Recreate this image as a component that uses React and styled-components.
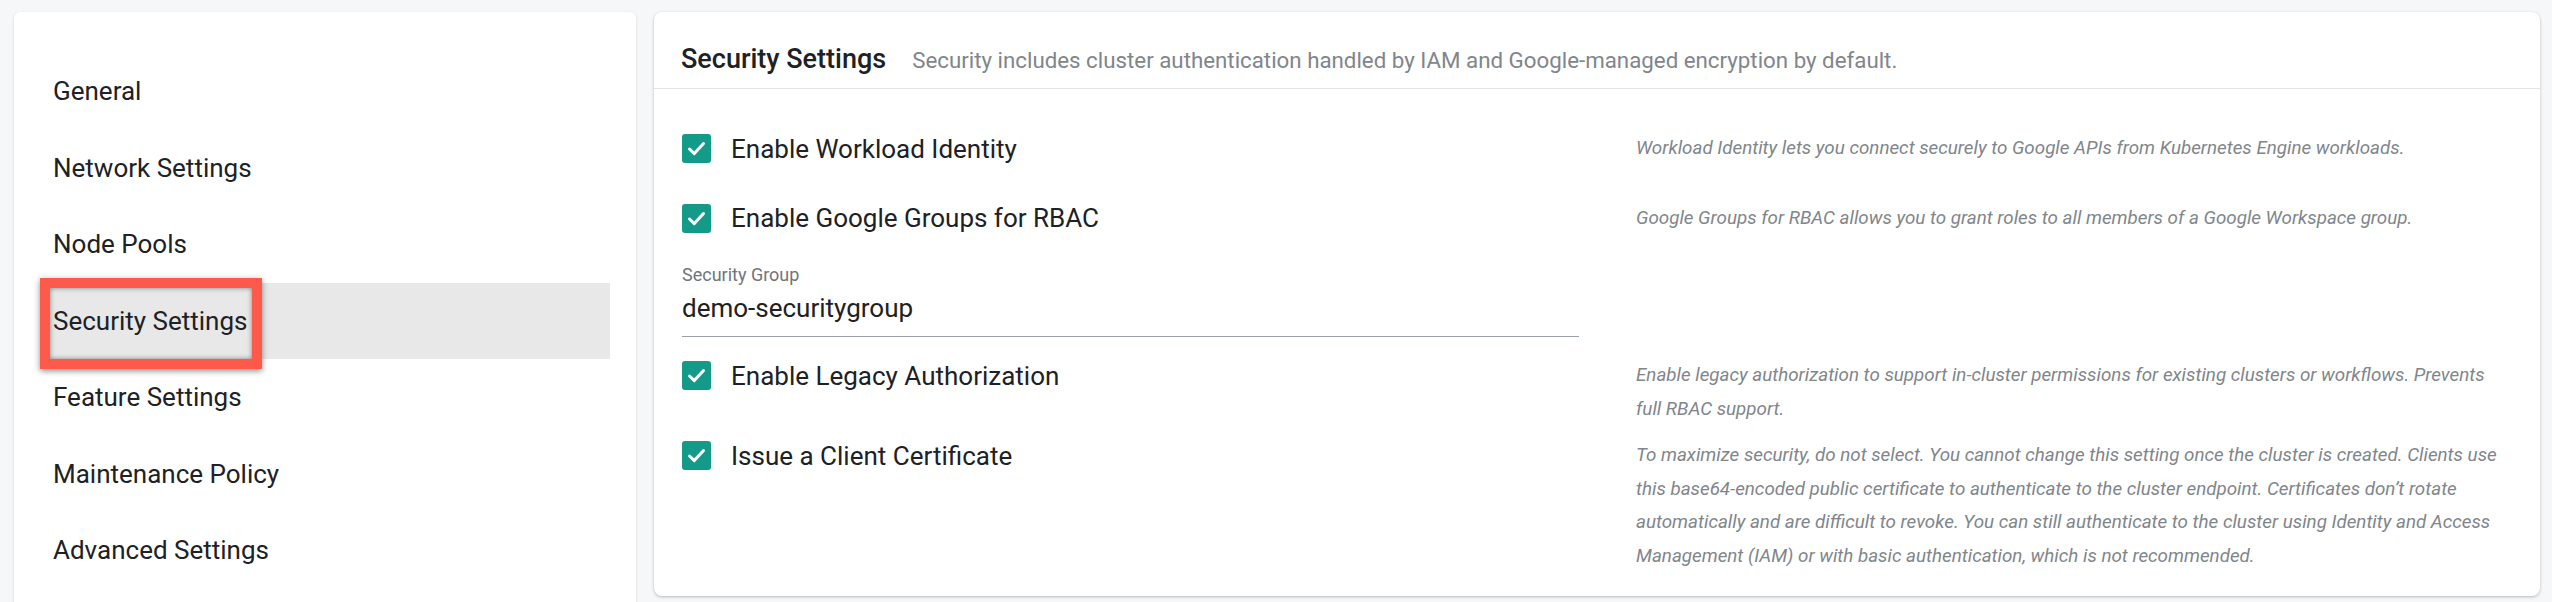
import React from 'react';
import styled, { createGlobalStyle } from 'styled-components';

const GlobalStyle = createGlobalStyle`
  body {
    margin: 0;
    background: #f6f7f9;
    font-family: Roboto, "Liberation Sans", Arial, sans-serif;
    color: #202124;
  }
`;

const Page = styled.div`
  display: flex;
  align-items: flex-start;
  gap: 18px;
  padding: 12px 12px 0 14px;
  height: 590px;
  overflow: hidden;
`;

const NavCard = styled.nav`
  width: 622px;
  height: 640px;
  flex-shrink: 0;
  background: white;
  border-radius: 6px;
  box-shadow: 0 1px 3px rgba(60, 64, 67, 0.18);
  padding: 41px 26px 0 26px;
  box-sizing: border-box;
`;

const NavItem = styled.div`
  position: relative;
  height: 76.5px;
  line-height: 76.5px;
  padding-left: 13px;
  font-size: 26px;
  color: #202124;
  background: ${p => (p.active ? '#e8e8e8' : 'transparent')};
  cursor: pointer;
`;

const Callout = styled.span`
  position: absolute;
  left: 0;
  top: -5px;
  width: 222px;
  height: 91px;
  box-sizing: border-box;
  border: 10px solid #fd5a4b;
  box-shadow: 0 2px 6px rgba(0, 0, 0, 0.45), inset 0 0 5px rgba(0, 0, 0, 0.45);
  pointer-events: none;
`;

const Panel = styled.section`
  flex: 1;
  background: white;
  border-radius: 8px;
  box-shadow: 0 1px 3px rgba(60, 64, 67, 0.35);
  height: 584px;
  box-sizing: border-box;
`;

const PanelHeader = styled.header`
  display: flex;
  align-items: baseline;
  gap: 26px;
  height: 77px;
  box-sizing: border-box;
  padding: 31px 27px 0;
  border-bottom: 1px solid #e3e3e3;
`;

const Title = styled.h2`
  margin: 0;
  font-size: 27px;
  font-weight: 500;
  color: #202124;
`;

const Subtitle = styled.span`
  font-size: 22.3px;
  color: #80868b;
`;

const Body = styled.div`
  padding: 43px 40px 0 28px;
`;

const Row = styled.div`
  display: grid;
  grid-template-columns: 897px 1fr;
  column-gap: 57px;
  align-items: start;
  margin-bottom: ${p => p.after || 0}px;
`;

const CheckLabel = styled.label`
  display: flex;
  align-items: center;
  gap: 20px;
  height: 33px;
  font-size: 26px;
  color: #202124;
`;

const Box = styled.svg`
  width: 29px;
  height: 29px;
  flex-shrink: 0;
`;

const Help = styled.p`
  margin: 0;
  font-size: 18.8px;
  line-height: 33.5px;
  font-style: italic;
  color: #80868b;
  white-space: nowrap;
`;

const Field = styled.div`
  border-bottom: 1px solid #9aa0a6;
  padding-bottom: 10px;
`;

const FieldLabel = styled.div`
  font-size: 18px;
  line-height: 24px;
  color: #70757a;
`;

const FieldValue = styled.div`
  margin-top: 3px;
  font-size: 26px;
  line-height: 36px;
  color: #202124;
`;

const Checkbox = () => (
  <Box viewBox="0 0 29 29">
    <rect x="0" y="0" width="29" height="29" rx="3" fill="#139a89" />
    <path d="M7.5 15 L12.3 19.6 L21.5 9.6" fill="none" stroke="white" strokeWidth="3" strokeLinecap="round" strokeLinejoin="round" />
  </Box>
);

const navItems = [
  'General',
  'Network Settings',
  'Node Pools',
  'Security Settings',
  'Feature Settings',
  'Maintenance Policy',
  'Advanced Settings',
];

export default function App() {
  return (
    <>
      <GlobalStyle />
      <Page>
        <NavCard>
          {navItems.map(item => (
            <NavItem key={item} active={item === 'Security Settings'}>
              {item}
              {item === 'Security Settings' && <Callout />}
            </NavItem>
          ))}
        </NavCard>

        <Panel>
          <PanelHeader>
            <Title>Security Settings</Title>
            <Subtitle>Security includes cluster authentication handled by IAM and Google-managed encryption by default.</Subtitle>
          </PanelHeader>
          <Body>
            <Row after={36}>
              <CheckLabel><Checkbox />Enable Workload Identity</CheckLabel>
              <Help>Workload Identity lets you connect securely to Google APIs from Kubernetes Engine workloads.</Help>
            </Row>
            <Row after={28}>
              <CheckLabel><Checkbox />Enable Google Groups for RBAC</CheckLabel>
              <Help>Google Groups for RBAC allows you to grant roles to all members of a Google Workspace group.</Help>
            </Row>
            <Row after={22}>
              <Field>
                <FieldLabel>Security Group</FieldLabel>
                <FieldValue>demo-securitygroup</FieldValue>
              </Field>
            </Row>
            <Row after={13}>
              <CheckLabel><Checkbox />Enable Legacy Authorization</CheckLabel>
              <Help>
                Enable legacy authorization to support in-cluster permissions for existing clusters or workflows. Prevents<br />
                full RBAC support.
              </Help>
            </Row>
            <Row>
              <CheckLabel><Checkbox />Issue a Client Certificate</CheckLabel>
              <Help>
                To maximize security, do not select. You cannot change this setting once the cluster is created. Clients use<br />
                this base64-encoded public certificate to authenticate to the cluster endpoint. Certificates don’t rotate<br />
                automatically and are difficult to revoke. You can still authenticate to the cluster using Identity and Access<br />
                Management (IAM) or with basic authentication, which is not recommended.
              </Help>
            </Row>
          </Body>
        </Panel>
      </Page>
    </>
  );
}
